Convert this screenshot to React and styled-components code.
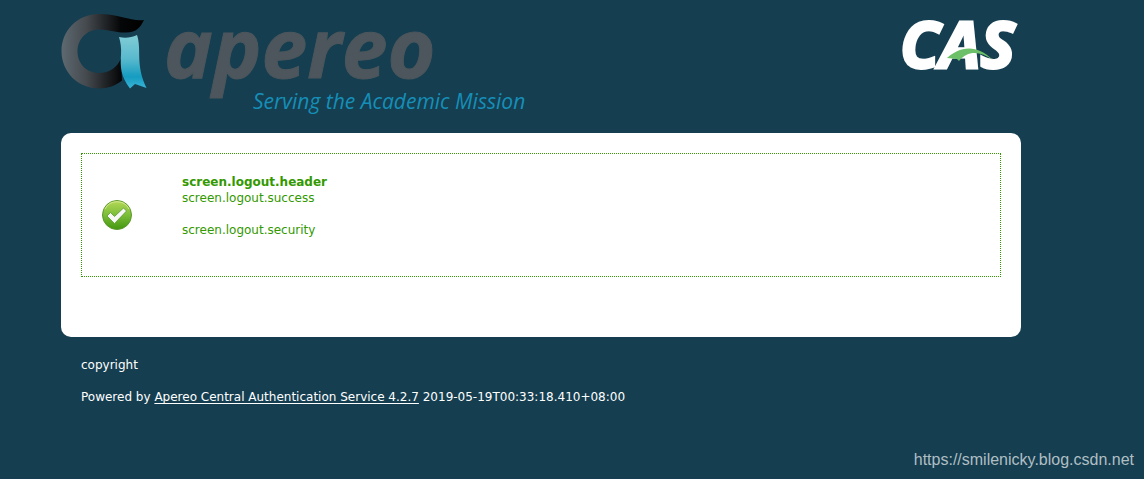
import React from 'react';
import styled, { createGlobalStyle } from 'styled-components';

const GlobalStyle = createGlobalStyle`
  * {
    box-sizing: border-box;
  }

  body {
    margin: 0;
    background: #153e50;
    color: #ffffff;
    font-family: Verdana, "DejaVu Sans", sans-serif;
    font-size: 12px;
    line-height: 16px;
  }
`;

const Page = styled.div`
  display: flex;
  flex-direction: column;
  min-height: 100vh;
`;

const Container = styled.div`
  width: 100%;
  padding: 12px 123px 0 61px;
`;

const Header = styled.header`
  display: flex;
  justify-content: space-between;
  align-items: flex-start;
  margin-bottom: 16px;
`;

const LogoLink = styled.a`
  display: block;

  svg {
    display: block;
    overflow: visible;
  }
`;

const Panel = styled.main`
  padding: 20px 20px 60px;
  border-radius: 10px;
  background: #ffffff;
`;

const SuccessMessage = styled.section`
  display: flex;
  align-items: center;
  gap: 50px;
  min-height: 124px;
  padding: 20px;
  border: 1px dotted #339900;
  color: #339900;
`;

const MessageText = styled.div`
  align-self: flex-start;
`;

const MessageTitle = styled.h2`
  margin: 0;
  font-size: 12px;
  line-height: 16px;
  font-weight: 700;
`;

const MessageLine = styled.p`
  margin: 0 0 16px;
`;

const Footer = styled.footer`
  padding: 20px;

  p {
    margin: 0 0 16px;
  }

  a {
    color: inherit;
    text-decoration: underline;
    text-underline-offset: 2px;
  }
`;

const SiteMark = styled.div`
  margin-top: auto;
  padding: 0 10px 10px;
  color: #b0bec4;
  font-family: "Liberation Sans", Arial, sans-serif;
  font-size: 16px;
  line-height: 18px;
  text-align: right;
`;

function ApereoLogo() {
  return (
    <svg width="480" height="105" viewBox="61 12 480 105" role="img" aria-label="Apereo, Serving the Academic Mission">
      <defs>
        <linearGradient id="ring" x1="0" x2="1" y1="0" y2="0">
          <stop offset="0" stopColor="#5d6970" />
          <stop offset="0.3" stopColor="#454a4f" />
          <stop offset="0.72" stopColor="#050607" />
          <stop offset="1" stopColor="#000000" />
        </linearGradient>
        <linearGradient id="ribbon" x1="0" x2="0" y1="0" y2="1">
          <stop offset="0" stopColor="#82cdd6" />
          <stop offset="0.45" stopColor="#58b9cd" />
          <stop offset="0.78" stopColor="#159cc0" />
          <stop offset="1" stopColor="#38b4d8" />
        </linearGradient>
      </defs>
      <path
        fill="url(#ring)"
        d="M144 20 C132 22 120 14 99 14 C77 14 61.500 31 61.500 51 C61.500 72 78 88.500 99 88.500 C108 88.500 116 85.500 122 80.500 L121 58 C118 67 109 73 99 73 C86.500 73 77.500 63.500 77.500 51.500 C77.500 39 87 29.500 99 29.500 C109 29.500 116 33 126 32.500 C137 32 140 28 144 20Z"
      />
      <path
        fill="url(#ribbon)"
        d="M119 37 C126 38.500 131 37.500 137 35 C142 50 135 64 146.500 88 L135 84 L130 88.500 C121 77 120 67 121 55 C121.500 48 120.500 42 119 37Z"
      />
      <text x="164" y="78" fill="#4c565c" stroke="#4c565c" strokeWidth="1" fontFamily="'Open Sans', sans-serif" fontSize="82" fontWeight="700" fontStyle="italic">apereo</text>
      <text x="253" y="109" fill="#158fb8" fontFamily="'Open Sans', sans-serif" fontSize="21" fontStyle="italic">Serving the Academic Mission</text>
    </svg>
  );
}

function CasLogo() {
  return (
    <svg width="120" height="62" viewBox="901 12 120 62" role="img" aria-label="CAS">
      <text x="900" y="68" fill="#ffffff" stroke="#ffffff" strokeWidth="3" fontFamily="'Open Sans', sans-serif" fontSize="65" fontWeight="700" fontStyle="italic">CAS</text>
      <path fill="#6cc067" d="M947 58 C958 48 975 42 993 60 C980 51 968 50 959 61 L957 59Z" />
    </svg>
  );
}

function SuccessIcon() {
  return (
    <svg width="30" height="30" viewBox="0 0 30 30" aria-hidden="true">
      <defs>
        <linearGradient id="disc" x1="0" x2="0" y1="0" y2="1">
          <stop offset="0" stopColor="#b5d957" />
          <stop offset="0.5" stopColor="#7bbd38" />
          <stop offset="1" stopColor="#43960f" />
        </linearGradient>
      </defs>
      <circle cx="15" cy="15" r="14.500" fill="url(#disc)" stroke="#5c982d" />
      <path d="M3 9 A13.500 13.500 0 0 1 27 9" fill="none" stroke="#d4ea91" strokeWidth="1" />
      <path
        d="M5 16 L8.500 12.500 L12.500 16.500 L21.500 8 L24.500 11 L12.500 23.500Z"
        fill="#f7f7f7"
        stroke="#58992b"
        strokeWidth="0.800"
      />
    </svg>
  );
}

export default function App() {
  return (
    <Page>
      <GlobalStyle />
      <Container>
        <Header>
          <LogoLink href="#apereo"><ApereoLogo /></LogoLink>
          <LogoLink href="#cas"><CasLogo /></LogoLink>
        </Header>
        <Panel>
          <SuccessMessage>
            <SuccessIcon />
            <MessageText>
              <MessageTitle>screen.logout.header</MessageTitle>
              <MessageLine>screen.logout.success</MessageLine>
              <MessageLine>screen.logout.security</MessageLine>
            </MessageText>
          </SuccessMessage>
        </Panel>
        <Footer>
          <p>copyright</p>
          <p>
            Powered by <a href="#service">Apereo Central Authentication Service 4.2.7</a> 2019-05-19T00:33:18.410+08:00
          </p>
        </Footer>
      </Container>
      <SiteMark>https://smilenicky.blog.csdn.net</SiteMark>
    </Page>
  );
}
